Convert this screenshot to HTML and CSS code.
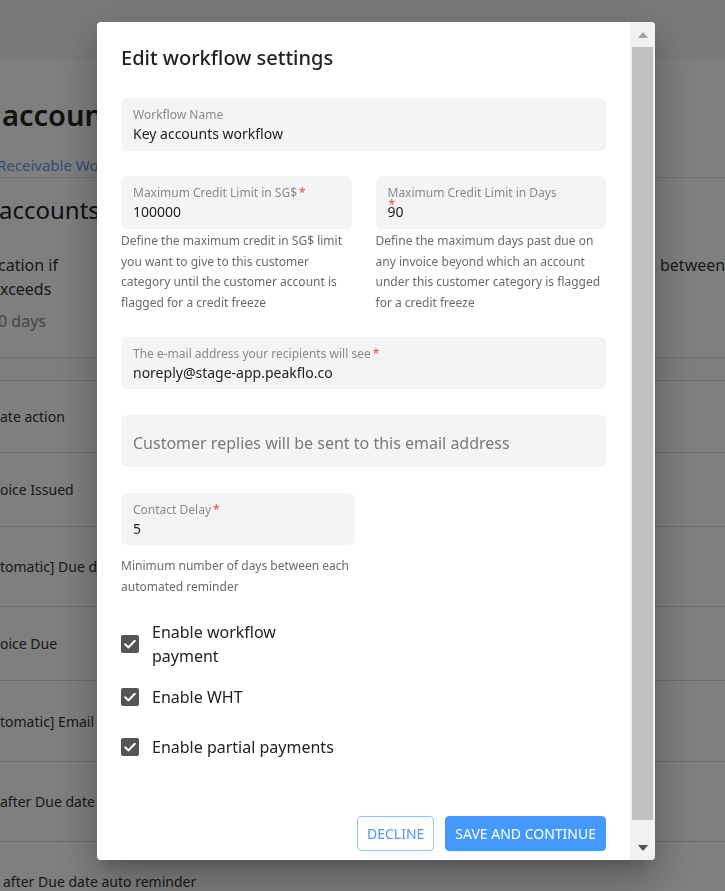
FILE: index.html
```html
<!DOCTYPE html>
<html lang="en">
<head>
<meta charset="utf-8">
<title>Edit workflow settings</title>
<link rel="stylesheet" href="styles.css">
</head>
<body>
<div class="page">
  <div class="topbar"></div>
  <div class="page-main">
    <h1 class="bg-title">accounts workflow</h1>
    <div class="bg-link">Receivable Workflows</div>
    <div class="bg-divider"></div>
    <h2 class="bg-sub">accounts workflow</h2>
    <div class="bg-desc-row">
      <p class="bg-desc">cation if<br>xceeds</p>
      <p class="bg-desc-right">between each</p>
    </div>
    <div class="bg-days">0 days</div>
    <div class="bg-table">
      <div class="bg-thead"></div>
      <div class="bg-row h72">ate action</div>
      <div class="bg-row h74">oice Issued</div>
      <div class="bg-row h80">tomatic] Due date reminder</div>
      <div class="bg-row h74">oice Due</div>
      <div class="bg-row h81">tomatic] Email reminder</div>
      <div class="bg-row h80">after Due date auto reminder</div>
      <div class="bg-row h80 indent">after Due date auto reminder</div>
    </div>
  </div>
</div>

<div class="overlay">
  <div class="modal">
    <div class="modal-body">
      <h2 class="modal-title">Edit workflow settings</h2>

      <div class="field">
        <div class="field-label">Workflow Name</div>
        <div class="field-value">Key accounts workflow</div>
      </div>

      <div class="field-grid">
        <div class="field-col">
          <div class="field">
            <div class="field-label">Maximum Credit Limit in SG$<span class="req">*</span></div>
            <div class="field-value">100000</div>
          </div>
          <p class="helper">Define the maximum credit in SG$ limit you want to give to this customer category until the customer account is flagged for a credit freeze</p>
        </div>
        <div class="field-col">
          <div class="field">
            <div class="field-label">Maximum Credit Limit in Days<span class="req req-wrapped">*</span></div>
            <div class="field-value">90</div>
          </div>
          <p class="helper">Define the maximum days past due on any invoice beyond which an account under this customer category is flagged for a credit freeze</p>
        </div>
      </div>

      <div class="field field-email">
        <div class="field-label">The e-mail address your recipients will see<span class="req">*</span></div>
        <div class="field-value">noreply@stage-app.peakflo.co</div>
      </div>

      <div class="field field-placeholder">
        <span class="placeholder">Customer replies will be sent to this email address</span>
      </div>

      <div class="field field-delay">
        <div class="field-label">Contact Delay<span class="req">*</span></div>
        <div class="field-value">5</div>
      </div>
      <p class="helper helper-delay">Minimum number of days between each automated reminder</p>

      <div class="checks">
        <label class="check-row">
          <span class="checkbox"><svg viewBox="0 0 18 18" width="18" height="18"><path d="M4.2 9.3 L7.5 12.4 L13.8 5.8" fill="none" stroke="#fff" stroke-width="2" stroke-linecap="round" stroke-linejoin="round"/></svg></span>
          <span class="check-label narrow">Enable workflow payment</span>
        </label>
        <label class="check-row">
          <span class="checkbox"><svg viewBox="0 0 18 18" width="18" height="18"><path d="M4.2 9.3 L7.5 12.4 L13.8 5.8" fill="none" stroke="#fff" stroke-width="2" stroke-linecap="round" stroke-linejoin="round"/></svg></span>
          <span class="check-label">Enable WHT</span>
        </label>
        <label class="check-row">
          <span class="checkbox"><svg viewBox="0 0 18 18" width="18" height="18"><path d="M4.2 9.3 L7.5 12.4 L13.8 5.8" fill="none" stroke="#fff" stroke-width="2" stroke-linecap="round" stroke-linejoin="round"/></svg></span>
          <span class="check-label">Enable partial payments</span>
        </label>
      </div>

      <div class="actions">
        <button class="btn btn-outline">DECLINE</button>
        <button class="btn btn-primary">SAVE AND CONTINUE</button>
      </div>
    </div>
    <div class="scrollbar">
      <div class="sb-btn"><span class="arrow-up"></span></div>
      <div class="sb-thumb"></div>
      <div class="sb-track"></div>
      <div class="sb-btn"><span class="arrow-down"></span></div>
    </div>
  </div>
</div>
</body>
</html>
```

FILE: styles.css
```css
* { box-sizing: border-box; }

html, body {
  margin: 0;
  padding: 0;
  width: 725px;
  height: 891px;
  overflow: hidden;
}

body {
  background: #ffffff;
  font-family: "Noto Sans", "Open Sans", "DejaVu Sans", sans-serif;
  color: #222;
}

/* ---------- background page ---------- */
.page {
  width: 725px;
  height: 891px;
  overflow: hidden;
}

.topbar {
  height: 60px;
  background: #f4f4f4;
}

.page-main {
  padding-top: 35px;
}

.bg-title {
  margin: 0;
  padding-left: 2px;
  font-size: 29px;
  line-height: 40px;
  font-weight: 600;
  color: #222;
  white-space: nowrap;
}

.bg-link {
  margin-top: 18px;
  margin-left: -3px;
  font-size: 15px;
  line-height: 24px;
  color: #5b9ef0;
  white-space: nowrap;
}

.bg-divider {
  height: 1px;
  background: #e6e6e6;
}

.bg-sub {
  margin: 14px 0 0 -1px;
  font-size: 24px;
  line-height: 36px;
  font-weight: 400;
  color: #222;
  white-space: nowrap;
}

.bg-desc-row {
  display: flex;
  margin-top: 25px;
}

.bg-desc {
  margin: 0;
  width: 660px;
  flex: none;
  font-size: 16px;
  line-height: 24px;
  color: #333;
  text-indent: -2px;
}

.bg-desc-right {
  margin: 0;
  font-size: 16px;
  line-height: 24px;
  color: #333;
  white-space: nowrap;
}

.bg-days {
  margin-top: 8px;
  margin-left: -2px;
  font-size: 16px;
  line-height: 24px;
  color: #888;
}

.bg-table {
  margin-top: 24px;
}

.bg-thead {
  height: 24px;
  border-top: 1px solid #d8d8d8;
  border-bottom: 1px solid #d8d8d8;
  background: #fafafa;
}

.bg-row {
  display: flex;
  align-items: center;
  border-bottom: 1px solid #d8d8d8;
  font-size: 14px;
  color: #333;
  white-space: nowrap;
}

.bg-row.indent { padding-left: 3px; }
.h72 { height: 72px; }
.h74 { height: 74px; }
.h80 { height: 80px; }
.h81 { height: 81px; }

/* ---------- overlay & modal ---------- */
.overlay {
  position: fixed;
  inset: 0;
  background: rgba(0, 0, 0, 0.5);
  padding: 22px 0 0 97px;
}

.modal {
  width: 558px;
  height: 838px;
  background: #ffffff;
  border-radius: 4px;
  overflow: hidden;
  display: flex;
  box-shadow: 0 11px 15px -7px rgba(0,0,0,0.2), 0 24px 38px 3px rgba(0,0,0,0.14), 0 9px 46px 8px rgba(0,0,0,0.12);
}

.modal-body {
  flex: 1;
  display: flex;
  flex-direction: column;
  padding: 22px 24px 9px 24px;
}

.modal-title {
  margin: 0;
  font-size: 20px;
  line-height: 28px;
  font-weight: 500;
  color: #222;
}

.field {
  margin-top: 26px;
  background: #f4f4f4;
  border-radius: 6px;
  padding: 9px 12px 6px 12px;
}

.field-label {
  font-size: 12px;
  line-height: 16px;
  color: #8a8a8a;
  white-space: nowrap;
}

.req {
  color: #f0443a;
  margin-left: 2px;
}

.req-wrapped {
  display: block;
  height: 0;
  line-height: 8px;
  margin-left: 1px;
}

.field-value {
  font-size: 14px;
  line-height: 22px;
  color: #222;
}

.field-grid {
  display: grid;
  grid-template-columns: 1fr 1fr;
  column-gap: 24px;
  margin-top: 25px;
}

.field-grid .field {
  margin-top: 0;
  height: 53px;
}

.helper {
  margin: 0;
  font-size: 12px;
  line-height: 20.7px;
  color: #6a6a6a;
}

.field-col .helper {
  padding-top: 2px;
}

.field-email {
  margin-top: 23px;
  height: 52px;
}

.field-placeholder {
  height: 52px;
  display: flex;
  align-items: center;
  padding: 4px 12px 0 12px;
}

.placeholder {
  font-size: 16px;
  color: #7a7a7a;
}

.field-delay {
  width: 234px;
  height: 52px;
}

.helper-delay {
  margin-top: 11px;
  width: 240px;
}

.checks {
  margin-top: 23px;
  display: flex;
  flex-direction: column;
  gap: 8px;
}

.check-row {
  display: flex;
  align-items: center;
  min-height: 42px;
  gap: 13px;
}

.checkbox {
  width: 18px;
  height: 18px;
  flex: none;
  border-radius: 2px;
  background: #555555;
  display: flex;
}

.check-label {
  font-size: 16px;
  line-height: 24px;
  color: #222;
}

.check-label.narrow {
  max-width: 150px;
}

.actions {
  margin-top: auto;
  display: flex;
  justify-content: flex-end;
  gap: 11px;
}

.btn {
  height: 35px;
  border-radius: 4px;
  font-family: "Noto Sans", "Open Sans", sans-serif;
  font-size: 14px;
  line-height: 20px;
  cursor: pointer;
}

.btn-outline {
  padding: 0 9px;
  background: #ffffff;
  border: 1px solid #94c4ff;
  color: #4a97ff;
}

.btn-primary {
  padding: 0 9px;
  background: #4499ff;
  border: 1px solid #4499ff;
  color: #ffffff;
}

/* ---------- scrollbar ---------- */
.scrollbar {
  width: 25px;
  flex: none;
  background: #f1f1f1;
  display: flex;
  flex-direction: column;
}

.sb-btn {
  height: 25px;
  flex: none;
  display: flex;
  align-items: center;
  justify-content: center;
}

.arrow-up {
  width: 0;
  height: 0;
  border-left: 5px solid transparent;
  border-right: 5px solid transparent;
  border-bottom: 6px solid #a3a3a3;
}

.arrow-down {
  width: 0;
  height: 0;
  border-left: 5.5px solid transparent;
  border-right: 5.5px solid transparent;
  border-top: 6px solid #505050;
}

.sb-thumb {
  height: 773px;
  margin: 0 2px;
  background: #c1c1c1;
  flex: none;
}

.sb-track {
  flex: 1;
}
```
